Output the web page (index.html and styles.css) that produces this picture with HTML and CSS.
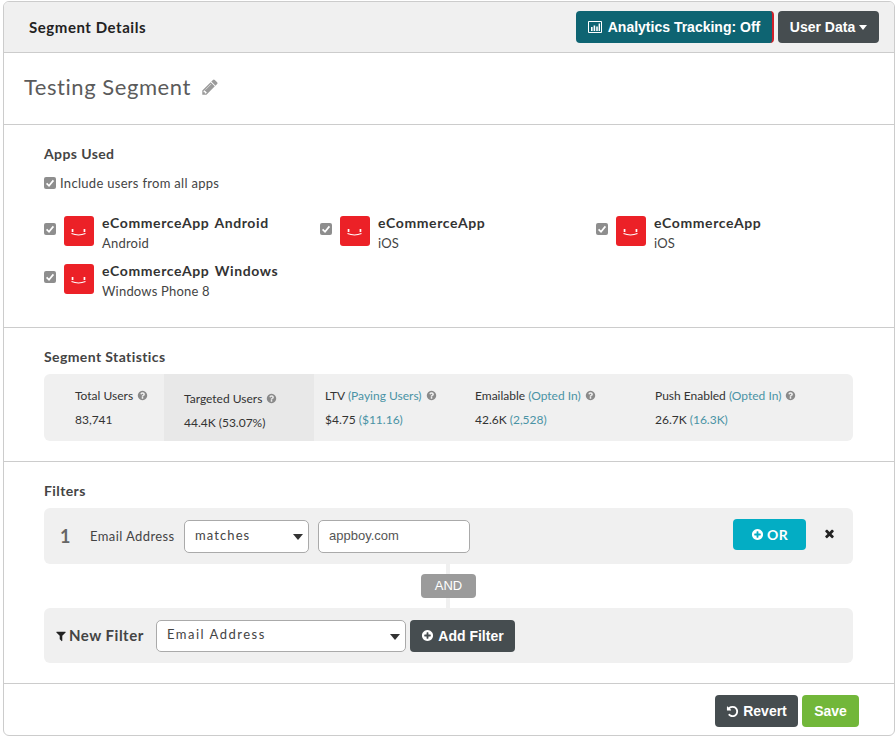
FILE: index.html
```html
<!DOCTYPE html>
<html lang="en">
<head>
    <meta charset="UTF-8">
    <title>Segment Details</title>
    <link rel="stylesheet" href="styles.css">
</head>
<body>
    <svg class="icon-defs" width="0" height="0">
        <symbol id="i-pencil" viewBox="0 0 1792 1792"><path d="M491 1536l91-91-235-235-91 91v107h128v128h107zm523-928q0-22-22-22-10 0-17 7l-542 542q-7 7-7 17 0 22 22 22 10 0 17-7l542-542q7-7 7-17zm-54-192l416 416-832 832h-416v-416zm683 96q0 53-37 90l-166 166-416-416 166-165q36-38 90-38 53 0 91 38l235 234q37 39 37 91z"/></symbol>
        <symbol id="i-help" viewBox="0 0 1792 1792"><path d="M1024 1376v-192q0-14-9-23t-23-9h-192q-14 0-23 9t-9 23v192q0 14 9 23t23 9h192q14 0 23-9t9-23zm256-672q0-88-55.5-163t-138.5-116-170-41q-243 0-371 213-15 24 8 42l132 100q7 6 19 6 16 0 25-12 53-68 86-92 34-24 86-24 48 0 85.5 26t37.5 59q0 38-20 61t-68 45q-63 28-115.5 86.5t-52.5 125.5v36q0 14 9 23t23 9h192q14 0 23-9t9-23q0-19 21.5-49.5t54.5-49.5q32-18 49-28.5t46-35 44.5-48 28-60.5 12.5-81zm384 192q0 209-103 385.5t-279.5 279.5-385.5 103-385.5-103-279.5-279.5-103-385.5 103-385.5 279.5-279.5 385.5-103 385.5 103 279.5 279.5 103 385.5z"/></symbol>
        <symbol id="i-plus" viewBox="0 0 1792 1792"><path d="M1344 960v-128q0-26-19-45t-45-19h-256v-256q0-26-19-45t-45-19h-128q-26 0-45 19t-19 45v256h-256q-26 0-45 19t-19 45v128q0 26 19 45t45 19h256v256q0 26 19 45t45 19h128q26 0 45-19t19-45v-256h256q26 0 45-19t19-45zm320-64q0 209-103 385.5t-279.5 279.5-385.5 103-385.5-103-279.5-279.5-103-385.5 103-385.5 279.5-279.5 385.5-103 385.5 103 279.5 279.5 103 385.5z"/></symbol>
        <symbol id="i-times" viewBox="0 0 1792 1792"><path d="M1490 1322q0 40-28 68l-136 136q-28 28-68 28t-68-28l-294-294-294 294q-28 28-68 28t-68-28l-136-136q-28-28-28-68t28-68l294-294-294-294q-28-28-28-68t28-68l136-136q28-28 68-28t68 28l294 294 294-294q28-28 68-28t68 28l136 136q28 28 28 68t-28 68l-294 294 294 294q28 28 28 68z"/></symbol>
        <symbol id="i-filter" viewBox="0 0 1792 1792"><path d="M1595 295q17 41-14 70l-493 493v742q0 42-39 59-13 5-25 5-27 0-45-19l-256-256q-19-19-19-45v-486l-493-493q-31-29-14-70 17-39 59-39h1280q42 0 59 39z"/></symbol>
        <symbol id="i-undo" viewBox="0 0 1792 1792"><path d="M1664 896q0 156-61 298t-164 245-245 164-298 61q-172 0-327-72.5t-264-204.5q-7-10-6.5-22.5t8.5-20.5l137-138q10-9 25-9 16 2 23 12 73 95 179 147t225 52q104 0 198.5-40.5t163.5-109.5 109.5-163.5 40.5-198.5-40.5-198.5-109.5-163.5-163.5-109.5-198.5-40.5q-98 0-188 35.5t-160 101.5l137 138q31 30 14 69-17 40-59 40h-448q-26 0-45-19t-19-45v-448q0-42 40-59 39-17 69 14l130 129q107-101 244.5-156.5t284.5-55.5q156 0 298 61t245 164 164 245 61 298z"/></symbol>
        <symbol id="i-check" viewBox="0 0 12 12"><path d="M2.6 6.4 5 8.8 9.4 3.4" fill="none" stroke="#fff" stroke-width="1.7"/></symbol>
        <symbol id="i-logo" viewBox="0 0 30 30"><rect width="30" height="30" rx="3" fill="#ec2127"/><rect x="7.700" y="13" width="1.700" height="3" fill="#fff"/><rect x="19.600" y="13" width="1.700" height="3" fill="#fff"/><path d="M7.500 17.600q7 2.800 14 0" fill="none" stroke="#fff" stroke-width="1.100"/></symbol>
    </svg>

    <div class="card">
        <header class="card-head">
            <h1>Segment Details</h1>
            <div class="head-btns">
                <button class="btn btn-teal">
                    <svg class="chart-icon" viewBox="0 0 14 12" width="14" height="12"><path d="M.5.5h13v11H.5z" fill="none" stroke="#fff"/><path d="M3 6h1.6v4H3zM5.6 4.5h1.6V10H5.6zM8.2 5.5h1.6V10H8.200zM10.600 2.500h1.400V10h-1.400z" fill="#fff"/></svg>
                    Analytics Tracking: Off
                </button>
                <button class="btn btn-dark">User Data <span class="caret"></span></button>
            </div>
        </header>

        <section class="name-row">
            <h2>Testing Segment</h2>
            <svg class="pencil"><use href="#i-pencil"/></svg>
        </section>

        <section class="block apps">
            <h3>Apps Used</h3>
            <label class="all-apps"><span class="check"><svg><use href="#i-check"/></svg></span>Include users from all apps</label>
            <div class="app-grid">
                <div class="app">
                    <span class="check"><svg><use href="#i-check"/></svg></span>
                    <svg class="logo"><use href="#i-logo"/></svg>
                    <div><b>eCommerceApp Android</b><span>Android</span></div>
                </div>
                <div class="app">
                    <span class="check"><svg><use href="#i-check"/></svg></span>
                    <svg class="logo"><use href="#i-logo"/></svg>
                    <div><b>eCommerceApp</b><span>iOS</span></div>
                </div>
                <div class="app">
                    <span class="check"><svg><use href="#i-check"/></svg></span>
                    <svg class="logo"><use href="#i-logo"/></svg>
                    <div><b>eCommerceApp</b><span>iOS</span></div>
                </div>
                <div class="app">
                    <span class="check"><svg><use href="#i-check"/></svg></span>
                    <svg class="logo"><use href="#i-logo"/></svg>
                    <div><b>eCommerceApp Windows</b><span>Windows Phone 8</span></div>
                </div>
            </div>
        </section>

        <section class="block stats-block">
            <h3>Segment Statistics</h3>
            <div class="stats">
                <div class="stat stat-total">
                    <p class="stat-label">Total Users <svg class="help"><use href="#i-help"/></svg></p>
                    <p>83,741</p>
                </div>
                <div class="stat stat-target">
                    <p class="stat-label">Targeted Users <svg class="help"><use href="#i-help"/></svg></p>
                    <p>44.4K (53.07%)</p>
                </div>
                <div class="stat stat-ltv">
                    <p class="stat-label">LTV <i>(Paying Users)</i> <svg class="help"><use href="#i-help"/></svg></p>
                    <p>$4.75 <i>($11.16)</i></p>
                </div>
                <div class="stat stat-email">
                    <p class="stat-label">Emailable <i>(Opted In)</i> <svg class="help"><use href="#i-help"/></svg></p>
                    <p>42.6K <i>(2,528)</i></p>
                </div>
                <div class="stat">
                    <p class="stat-label">Push Enabled <i>(Opted In)</i> <svg class="help"><use href="#i-help"/></svg></p>
                    <p>26.7K <i>(16.3K)</i></p>
                </div>
            </div>
        </section>

        <section class="block filters">
            <h3>Filters</h3>
            <div class="filter-row">
                <span class="filter-num">1</span>
                <span class="filter-name">Email Address</span>
                <div class="select select-op">
                    <select><option>matches</option></select>
                </div>
                <input class="text-input" type="text" value="appboy.com">
                <button class="btn btn-or"><svg><use href="#i-plus"/></svg>OR</button>
                <svg class="remove"><use href="#i-times"/></svg>
            </div>
            <div class="and-wrap"><span class="and">AND</span></div>
            <div class="new-filter">
                <svg class="funnel"><use href="#i-filter"/></svg>
                <span class="new-label">New Filter</span>
                <div class="select select-field">
                    <select><option>Email Address</option></select>
                </div>
                <button class="btn btn-dark btn-add"><svg><use href="#i-plus"/></svg>Add Filter</button>
            </div>
        </section>

        <footer class="card-foot">
            <button class="btn btn-dark btn-revert"><svg><use href="#i-undo"/></svg>Revert</button>
            <button class="btn btn-save">Save</button>
        </footer>
    </div>
</body>
</html>
```

FILE: styles.css
```css
* {
    box-sizing: border-box;
}
body {
    margin: 0;
    padding: 1px 1px 0 3px;
    background: #fff;
    color: #333;
    font-family: "Lato", sans-serif;
    font-size: 13px;
}
h1, h2, h3, p {
    margin: 0;
}
.icon-defs {
    position: absolute;
}
.card {
    width: 892px;
    height: 735px;
    border: 1px solid #ccc;
    border-radius: 6px;
    overflow: hidden;
}

/* header */
.card-head {
    height: 51px;
    padding: 0 15px 0 25px;
    display: flex;
    align-items: center;
    justify-content: space-between;
    background: #f0f0f0;
    border-bottom: 1px solid #ccc;
}
.card-head h1 {
    font-size: 15px;
    font-weight: 700;
    color: #222;
    letter-spacing: .55px;
}
.head-btns {
    display: flex;
    gap: 4px;
}
.btn {
    height: 32px;
    border: 0;
    border-radius: 4px;
    color: #fff;
    font-family: "Liberation Sans", sans-serif;
    font-size: 14px;
    font-weight: 700;
    display: flex;
    align-items: center;
    justify-content: center;
    padding: 0;
}
.btn svg {
    fill: currentColor;
}
.btn-teal {
    width: 198px;
    gap: 6px;
    background: #0e6472;
    border-right: 2px solid #d0202a;
}
.btn-dark {
    background: #464d50;
}
.head-btns .btn-dark {
    width: 101px;
}
.caret {
    display: inline-block;
    margin-left: 4px;
    border-left: 4.500px solid transparent;
    border-right: 4.500px solid transparent;
    border-top: 5px solid #fff;
}

/* name */
.name-row {
    height: 72px;
    padding: 0 0 4px 20px;
    display: flex;
    align-items: center;
    gap: 10px;
    border-bottom: 1px solid #ccc;
}
.name-row h2 {
    font-size: 22px;
    font-weight: 400;
    color: #5b5b5b;
    letter-spacing: .55px;
}
.pencil {
    width: 18px;
    height: 18px;
    fill: #9b9b9b;
}

/* sections */
.block {
    padding: 0 40px;
    border-bottom: 1px solid #ccc;
}
.block h3 {
    font-size: 14px;
    font-weight: 700;
    color: #444;
    letter-spacing: .4px;
}

/* apps */
.apps {
    height: 203px;
    padding-top: 20px;
}
.check {
    width: 12px;
    height: 12px;
    border-radius: 2px;
    background: #8e8e8e;
    flex: none;
    display: block;
}
.check svg {
    display: block;
    width: 12px;
    height: 12px;
}
.all-apps {
    margin-top: 13px;
    display: flex;
    align-items: center;
    gap: 4px;
    letter-spacing: .3px;
    color: #444;
}
.app-grid {
    margin-top: 25px;
    display: grid;
    grid-template-columns: repeat(3, 276px);
    grid-auto-rows: 48px;
}
.app {
    display: flex;
    align-items: flex-start;
}
.app .check {
    margin: 7px 8px 0 0;
}
.logo {
    width: 30px;
    height: 30px;
    margin-right: 8px;
    flex: none;
}
.app b {
    display: block;
    margin-top: -2px;
    font-size: 14px;
    font-weight: 700;
    color: #333;
    letter-spacing: .6px;
    word-spacing: 1.500px;
    line-height: 17px;
}
.app span:not(.check) {
    display: block;
    margin-top: 4px;
    line-height: 17px;
    letter-spacing: .2px;
    color: #444;
}

/* statistics */
.stats-block {
    height: 134px;
    padding-top: 20px;
}
.stats {
    margin-top: 9px;
    height: 67px;
    width: 809px;
    display: flex;
    background: #f0f0f0;
    border-radius: 6px;
    overflow: hidden;
    font-size: 12px;
    color: #333;
}
.stat {
    flex: none;
    padding: 13px 0 0 11px;
}
.stat p {
    line-height: 17px;
}
.stat .stat-label {
    margin-bottom: 7px;
    white-space: nowrap;
}
.stat i {
    font-style: normal;
    color: #4a93a5;
}
.help {
    width: 11px;
    height: 11px;
    margin-left: 1px;
    vertical-align: -1px;
    fill: #8a8a8a;
}
.stat-total {
    width: 120px;
    padding-left: 31px;
}
.stat-target {
    width: 150px;
    padding: 16px 0 0 20px;
    background: #e8e8e8;
}
.stat-ltv {
    width: 150px;
}
.stat-email {
    width: 180px;
}

/* filters */
.filters {
    height: 222px;
    padding-top: 20px;
}
.filter-row, .new-filter {
    width: 809px;
    display: flex;
    align-items: center;
    background: #f0f0f0;
    border-radius: 6px;
}
.filter-row {
    margin-top: 9px;
    height: 56px;
    padding-left: 16px;
}
.filter-num {
    width: 30px;
    font-size: 18px;
    font-weight: 700;
    color: #666;
}
.filter-name {
    width: 94px;
    color: #444;
    letter-spacing: .4px;
}
.select {
    position: relative;
    height: 32px;
    background: #fff;
    border: 1px solid #aaa;
    border-radius: 5px;
}
.select select {
    appearance: none;
    width: 100%;
    height: 100%;
    padding: 0 10px 3px;
    border: 0;
    background: transparent;
    color: #444;
    font-family: "Lato", sans-serif;
    font-size: 13px;
    letter-spacing: 1.1px;
}
.select::after {
    content: "";
    position: absolute;
    right: 5px;
    top: 13px;
    border-left: 5.500px solid transparent;
    border-right: 5.500px solid transparent;
    border-top: 6px solid #333;
}
.select-op {
    width: 125px;
    height: 33px;
    margin-right: 9px;
}
.select-field select {
    letter-spacing: 1.500px;
}
.text-input {
    width: 152px;
    height: 33px;
    padding: 0 10px 2px;
    background: #fff;
    border: 1px solid #aaa;
    border-radius: 5px;
    color: #555;
    font-family: "Liberation Sans", sans-serif;
    font-size: 13px;
}
.btn-or {
    width: 73px;
    height: 31px;
    margin: 0 0 4px auto;
    gap: 3px;
    background: #03adc4;
    font-family: "Lato", sans-serif;
    letter-spacing: .4px;
}
.btn-or svg, .btn-add svg {
    width: 13px;
    height: 13px;
}
.remove {
    width: 13px;
    height: 13px;
    margin: 0 17px 5px 17px;
    fill: #222;
}
.and-wrap {
    height: 44px;
    width: 809px;
    display: flex;
    align-items: center;
    padding-left: 377px;
    background: linear-gradient(#f0f0f0, #f0f0f0) 402px 0 / 4px 100% no-repeat;
}
.and {
    width: 55px;
    height: 24px;
    border-radius: 4px;
    background: #9b9b9b;
    color: #fff;
    font-family: "Liberation Sans", sans-serif;
    font-size: 13px;
    line-height: 24px;
    text-align: center;
}
.new-filter {
    height: 55px;
    padding-left: 11px;
}
.funnel {
    width: 12px;
    height: 12px;
    margin-right: 2px;
    fill: #222;
}
.new-label {
    width: 87px;
    margin-bottom: 2px;
    font-size: 15px;
    font-weight: 700;
    color: #444;
    letter-spacing: .5px;
}
.select-field {
    width: 250px;
    margin-right: 4px;
}
.btn-add {
    width: 105px;
    gap: 4px;
}

/* footer */
.card-foot {
    height: 52px;
    padding: 11px 35px 0 0;
    display: flex;
    justify-content: flex-end;
    gap: 4px;
}
.btn-revert {
    width: 83px;
    gap: 4px;
}
.btn-revert svg {
    width: 13px;
    height: 13px;
}
.btn-save {
    width: 57px;
    background: #72b73a;
}
```
